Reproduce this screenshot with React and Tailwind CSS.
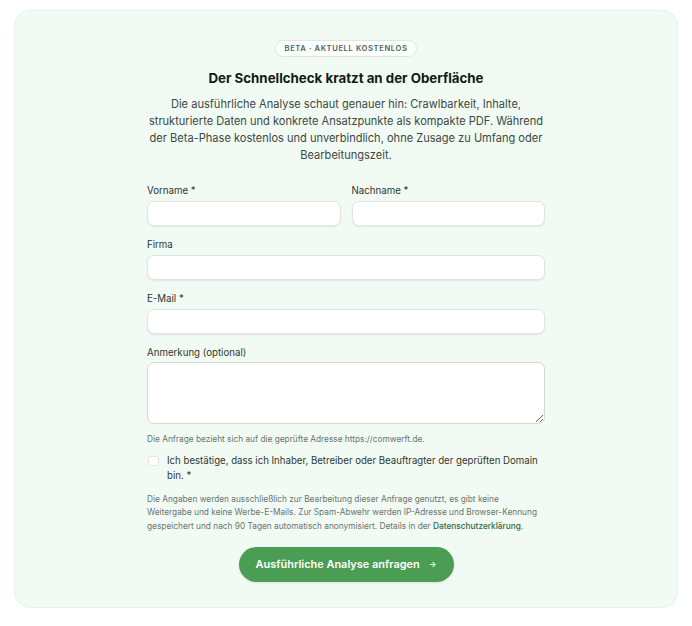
import React, { useState } from "react";

const Field = ({ label, className = "" }) => (
    <label className={"flex flex-col " + className}>
        <span className="text-[9.7px] leading-[13.5px] text-[#2d3631] mb-[3px]">{label}</span>
        <input
            type="text"
            className="block h-[25.5px] w-full rounded-[7px] border border-[#dfe5e1] bg-white px-2 text-[10px] shadow-[0_1px_2px_rgba(0,0,0,0.07)] outline-none"
        />
    </label>
);

const App = () => {
    const [confirmed, setConfirmed] = useState(false);

    return (
        <div className="min-h-screen bg-white pt-[10px] px-[14px] pb-[18px]" style={{ fontFamily: "Inter, 'Liberation Sans', sans-serif" }}>
            <div className="rounded-[16px] border border-[#e4f2e8] bg-[#f1fbf4] pt-[29px] pb-[25px]">
                <div className="mx-auto w-[404px] flex flex-col items-center">
                    {/* Badge */}
                    <span className="h-[17px] flex items-center rounded-full border border-[#dde9e0] bg-white px-[9px] text-[7.6px] font-semibold tracking-[0.08em] text-[#4a6654]">
                        BETA · AKTUELL KOSTENLOS
                    </span>

                    <h2 className="mt-[12px] text-[13.3px] leading-[18px] font-bold text-[#111a15]">
                        Der Schnellcheck kratzt an der Oberfläche
                    </h2>

                    <p className="mt-[8.5px] text-center text-[11.07px] leading-[17px] text-[#3d4742]">
                        Die ausführliche Analyse schaut genauer hin: Crawlbarkeit, Inhalte, strukturierte Daten und
                        konkrete Ansatzpunkte als kompakte PDF. Während der Beta-Phase kostenlos und unverbindlich,
                        ohne Zusage zu Umfang oder Bearbeitungszeit.
                    </p>
                </div>

                {/* Form */}
                <form className="mx-auto mt-[20.5px] w-[398px]" onSubmit={(e) => e.preventDefault()}>
                    <div className="grid grid-cols-2 gap-x-[11px]">
                        <Field label="Vorname *" />
                        <Field label="Nachname *" />
                    </div>
                    <Field label="Firma" className="mt-[12px]" />
                    <Field label="E-Mail *" className="mt-[12px]" />

                    <label className="mt-[12px] flex flex-col">
                        <span className="text-[9.7px] leading-[13.5px] text-[#2d3631] mb-[2px]">Anmerkung (optional)</span>
                        <textarea className="block h-[62px] w-full rounded-[7px] border border-[#d2d8d4] bg-white px-2 py-1 text-[10px] outline-none" />
                    </label>

                    <p className="mt-[9.5px] text-[8.3px] leading-[12px] text-[#6b746f]">
                        Die Anfrage bezieht sich auf die geprüfte Adresse https://comwerft.de.
                    </p>

                    <label className="mt-[7.5px] flex items-start gap-[8.5px]">
                        <input
                            type="checkbox"
                            checked={confirmed}
                            onChange={(e) => setConfirmed(e.target.checked)}
                            className="mt-[3px] ml-[1px] h-[10.5px] w-[10.5px] shrink-0 appearance-none rounded-[2px] border border-[#e3e8e5] bg-white checked:bg-[#4a9d52]"
                        />
                        <span className="text-[9.65px] leading-[15px] text-[#2d3631]">
                            Ich bestätige, dass ich Inhaber, Betreiber oder Beauftragter der geprüften Domain bin. *
                        </span>
                    </label>

                    <p className="mt-[10.5px] text-[8.3px] leading-[13.35px] text-[#6b746f]">
                        Die Angaben werden ausschließlich zur Bearbeitung dieser Anfrage genutzt, es gibt keine
                        Weitergabe und keine Werbe-E-Mails. Zur Spam-Abwehr werden IP-Adresse und Browser-Kennung
                        gespeichert und nach 90 Tagen automatisch anonymisiert. Details in der{" "}
                        <a href="#" className="font-medium text-[#2f6b3a]">Datenschutzerklärung</a>.
                    </p>

                    <div className="mt-[13.5px] flex justify-center">
                        <button
                            type="submit"
                            className="h-[35.5px] w-[215px] rounded-full bg-[#4a9d52] text-white text-[10.95px] font-semibold flex items-center justify-center gap-[9px] shadow-[0_1px_3px_rgba(0,0,0,0.1)]"
                        >
                            Ausführliche Analyse anfragen
                            <span className="text-[8px]">→</span>
                        </button>
                    </div>
                </form>
            </div>
        </div>
    );
};

export default App;
